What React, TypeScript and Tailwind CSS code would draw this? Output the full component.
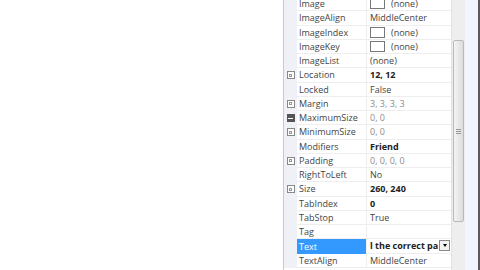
import React from 'react';

type Row = {
  name: string;
  value: string;
  expand?: 'plus' | 'filled';
  bold?: boolean;
  faint?: boolean;
  swatch?: boolean;
  selected?: boolean;
};

const rows: Row[] = [
  { name: 'Image', value: '(none)', swatch: true },
  { name: 'ImageAlign', value: 'MiddleCenter' },
  { name: 'ImageIndex', value: '(none)', swatch: true },
  { name: 'ImageKey', value: '(none)', swatch: true },
  { name: 'ImageList', value: '(none)' },
  { name: 'Location', value: '12, 12', expand: 'plus', bold: true },
  { name: 'Locked', value: 'False' },
  { name: 'Margin', value: '3, 3, 3, 3', expand: 'plus', faint: true },
  { name: 'MaximumSize', value: '0, 0', expand: 'filled', faint: true },
  { name: 'MinimumSize', value: '0, 0', expand: 'plus', faint: true },
  { name: 'Modifiers', value: 'Friend', bold: true },
  { name: 'Padding', value: '0, 0, 0, 0', expand: 'plus', faint: true },
  { name: 'RightToLeft', value: 'No' },
  { name: 'Size', value: '260, 240', expand: 'plus', bold: true },
  { name: 'TabIndex', value: '0', bold: true },
  { name: 'TabStop', value: 'True' },
  { name: 'Tag', value: '' },
  { name: 'Text', value: 'l the correct pa', bold: true, selected: true },
  { name: 'TextAlign', value: 'MiddleCenter' },
];

const ExpandBox = ({ kind }: { kind: 'plus' | 'filled' }) =>
  kind === 'filled' ? (
    <div className="w-[8px] h-[8px] bg-[#555] flex items-center justify-center">
      <div className="w-[5px] h-[1px] bg-white" />
    </div>
  ) : (
    <div className="w-[8px] h-[8px] border border-[#888] bg-white flex items-center justify-center">
      <div className="w-[3px] h-[3px] border border-[#999]" />
    </div>
  );

export default function App() {
  return (
    <div
      className="w-[480px] h-[270px] overflow-hidden bg-white flex text-[9px] text-[#444]"
      style={{ fontFamily: '"Open Sans", "Liberation Sans", sans-serif' }}
    >
      <div className="w-[283px] shrink-0 bg-white" />

      {/* property grid */}
      <div className="w-[168px] shrink-0 border-l border-[#c9c9cf] overflow-hidden">
        <div className="-mt-[3px] flex flex-col">
          {rows.map((r) => (
            <div key={r.name} className="flex h-[14.25px] items-stretch">
              <div className="w-[13px] shrink-0 bg-[#f0f1f7] flex items-center justify-center">
                {r.expand && <ExpandBox kind={r.expand} />}
              </div>
              <div
                className={
                  r.selected
                    ? 'w-[69px] shrink-0 bg-[#3399ff] text-white pl-[2px] flex items-center leading-[13px]'
                    : 'w-[69px] shrink-0 border-b border-[#eeeeee] pl-[2px] flex items-center leading-[13px]'
                }
              >
                {r.name}
              </div>
              <div className="w-px bg-[#eeeeee] shrink-0" />
              <div
                className={
                  'flex-1 min-w-0 flex items-center pl-[3px] leading-[13px] whitespace-nowrap border-b border-[#eeeeee] ' +
                  (r.bold ? 'font-bold text-[#222] ' : '') +
                  (r.faint ? 'text-[#8c8c8c] ' : '')
                }
              >
                {r.swatch && (
                  <div className="w-[15px] h-[11px] border border-[#777] bg-white mr-[6px] shrink-0" />
                )}
                <span className="flex-1 min-w-0">{r.value}</span>
                {r.selected && (
                  <div className="w-[11px] h-[11px] border border-[#888] bg-[#f2f2f2] flex items-center justify-center shrink-0 mr-[1px]">
                    <div className="w-0 h-0 border-l-[2.5px] border-r-[2.5px] border-t-[3px] border-l-transparent border-r-transparent border-t-black" />
                  </div>
                )}
              </div>
            </div>
          ))}
        </div>
      </div>

      {/* scrollbar */}
      <div className="w-[14px] shrink-0 bg-[#eeeeee] border-l border-[#e2e2e2] flex flex-col">
        <div className="h-[40px]" />
        <div className="h-[182px] mx-[1px] rounded-[2px] border border-[#b9b9b9] bg-gradient-to-r from-[#f4f4f4] to-[#dcdcdc] flex flex-col items-center justify-center gap-[1px]">
          <div className="w-[5px] h-px bg-[#999]" />
          <div className="w-[5px] h-px bg-[#999]" />
          <div className="w-[5px] h-px bg-[#999]" />
        </div>
      </div>

      <div className="w-[13px] shrink-0 bg-[#f1f5fd]" />
      <div className="w-[2px] shrink-0 bg-[#5a5a5a]" />
    </div>
  );
}
